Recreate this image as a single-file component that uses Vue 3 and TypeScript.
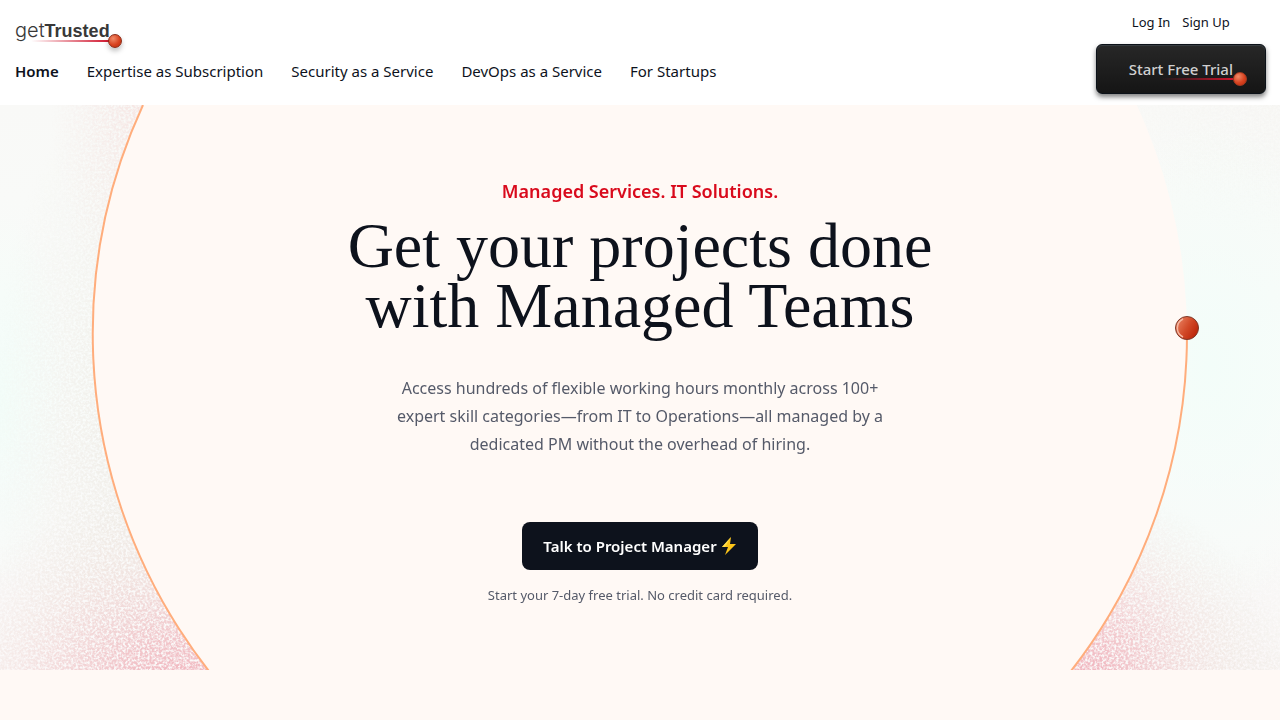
<script setup lang="ts">
interface NavItem {
  label: string
  current?: boolean
}

const navItems: NavItem[] = [
  { label: 'Home', current: true },
  { label: 'Expertise as Subscription' },
  { label: 'Security as a Service' },
  { label: 'DevOps as a Service' },
  { label: 'For Startups' },
]
</script>

<template>
  <div class="page">
    <header class="header">
      <div class="left">
        <a class="logo" href="#" aria-label="getTrusted">
          <span class="thin">get</span><span class="bold">Trusted</span>
          <span class="trail"></span>
          <span class="ball"></span>
        </a>
        <nav class="nav">
          <a v-for="item in navItems" :key="item.label" href="#" :class="{ current: item.current }">{{ item.label }}</a>
        </nav>
      </div>
      <div class="right">
        <div class="account">
          <a href="#">Log In</a>
          <a href="#">Sign Up</a>
        </div>
        <button class="trial" type="button">
          <span class="trial-text">Start Free Trial<span class="trail"></span><span class="ball"></span></span>
        </button>
      </div>
    </header>

    <main class="hero">
      <svg class="backdrop" viewBox="0 0 1280 565" preserveAspectRatio="xMidYMid slice" aria-hidden="true">
        <defs>
          <filter id="grain" x="0" y="0" width="100%" height="100%" color-interpolation-filters="sRGB">
            <feTurbulence type="fractalNoise" baseFrequency="0.42" numOctaves="2" seed="8" result="noise" />
            <feColorMatrix in="noise" type="matrix" values="0 0 0 0 0  0 0 0 0 0  0 0 0 0 0  3 0 0 0 -0.9" result="mask" />
            <feComposite in="SourceGraphic" in2="mask" operator="in" />
          </filter>
          <linearGradient id="base" x1="0" y1="0" x2="0" y2="1">
            <stop offset="0" stop-color="#f9f9f7" />
            <stop offset="0.5" stop-color="#f9fcfa" />
            <stop offset="1" stop-color="#fbf8f8" />
          </linearGradient>
          <radialGradient id="mint">
            <stop offset="0" stop-color="#f3fdf9" />
            <stop offset="1" stop-color="#f3fdf9" stop-opacity="0" />
          </radialGradient>
          <radialGradient id="rose">
            <stop offset="0" stop-color="#ee9cab" stop-opacity="0.9" />
            <stop offset="0.35" stop-color="#efb4bb" stop-opacity="0.7" />
            <stop offset="0.7" stop-color="#eed9d4" stop-opacity="0.4" />
            <stop offset="1" stop-color="#e8e4dc" stop-opacity="0" />
          </radialGradient>
          <radialGradient id="blush">
            <stop offset="0" stop-color="#f5cfcd" stop-opacity="0.5" />
            <stop offset="1" stop-color="#f3dcd8" stop-opacity="0" />
          </radialGradient>
          <radialGradient id="sand">
            <stop offset="0" stop-color="#ebe6df" stop-opacity="0.8" />
            <stop offset="0.5" stop-color="#efece6" stop-opacity="0.5" />
            <stop offset="1" stop-color="#f0efea" stop-opacity="0" />
          </radialGradient>
          <linearGradient id="disc-ball" x1="0" y1="0.2" x2="1" y2="0.8">
            <stop offset="0" stop-color="#ea8464" />
            <stop offset="0.5" stop-color="#d24a28" />
            <stop offset="1" stop-color="#b81f04" />
          </linearGradient>
        </defs>
        <rect width="1280" height="565" fill="url(#base)" />
        <ellipse cx="0" cy="290" rx="70" ry="200" fill="url(#mint)" />
        <ellipse cx="1210" cy="260" rx="150" ry="260" fill="url(#mint)" />
        <g filter="url(#grain)">
          <rect width="1280" height="565" fill="none" />
          <ellipse cx="140" cy="330" rx="150" ry="360" fill="url(#sand)" />
          <ellipse cx="150" cy="0" rx="100" ry="210" fill="url(#blush)" />
          <ellipse cx="190" cy="610" rx="280" ry="230" fill="url(#rose)" />
          <ellipse cx="1090" cy="600" rx="200" ry="220" fill="url(#rose)" />
          <ellipse cx="1280" cy="0" rx="180" ry="130" fill="url(#sand)" opacity="0.2" />
          <ellipse cx="1250" cy="590" rx="160" ry="150" fill="url(#sand)" opacity="0.6" />
        </g>
        <circle cx="640" cy="229" r="547" fill="#fff9f5" />
        <path d="M143 0A547 547 0 0 0 640 776A547 547 0 0 0 1187 229" fill="none" stroke="#ffad7c" stroke-width="2" />
        <circle cx="1187" cy="223" r="11.5" fill="url(#disc-ball)" stroke="#7d3a2a" stroke-width="1" />
        <path d="M1183 214A10 10 0 0 0 1183 232" fill="none" stroke="#f5b7a0" stroke-width="1.5" />
      </svg>
      <div class="content">
        <p class="eyebrow">Managed Services. IT Solutions.</p>
        <h1>Get your projects done<br />with Managed Teams</h1>
        <p class="lead">
          Access hundreds of flexible working hours monthly across 100+<br />
          expert skill categories—from IT to Operations—all managed by a<br />
          dedicated PM without the overhead of hiring.
        </p>
        <button class="cta" type="button">
          Talk to Project Manager
          <svg width="16" height="20" viewBox="0 0 16 20" aria-hidden="true">
            <path d="M10 1L1 11H7L4 19L15 8H9Z" fill="#fcc419" />
            <path d="M10 1L1 11H4Z" fill="#ffdf4f" />
          </svg>
        </button>
        <p class="note">Start your 7-day free trial. No credit card required.</p>
      </div>
    </main>
  </div>
</template>

<style>
body {
  margin: 0;
  background: #fff9f5;
}
</style>

<style scoped>
.page {
  font-family: "Noto Sans", "Open Sans", sans-serif;
  color: #0d121c;
}
a {
  color: inherit;
  text-decoration: none;
}
.header {
  display: flex;
  justify-content: space-between;
  box-sizing: border-box;
  min-height: 105px;
  padding: 12px 14px 11px 15px;
  background: #fff;
}
.left {
  display: flex;
  flex-direction: column;
  align-items: flex-start;
  gap: 11px;
}
.logo {
  position: relative;
  display: flex;
  align-items: baseline;
  height: 36px;
  line-height: 36px;
  color: #383838;
}
.thin {
  font-family: Inter, sans-serif;
  font-size: 20px;
  font-weight: 300;
}
.bold {
  font-family: "Liberation Sans", sans-serif;
  font-size: 18px;
  font-weight: 700;
}
.trail {
  position: absolute;
  height: 2px;
  background: linear-gradient(90deg, transparent, #d0142c);
}
.ball {
  position: absolute;
  box-sizing: border-box;
  width: 14px;
  height: 14px;
  border: 1px solid #8a2a17;
  border-radius: 50%;
  background: radial-gradient(circle at 35% 30%, #f08a68, #d84320 55%, #b92a0c);
}
.logo .trail {
  left: 16px;
  right: 0;
  top: 28px;
}
.logo .ball {
  right: -12px;
  top: 22px;
  box-shadow: 0 3px 5px rgba(0, 0, 0, 0.25);
}
.nav {
  display: flex;
  gap: 28px;
  font-size: 15px;
  line-height: 24px;
}
.current {
  font-weight: 600;
}
.right {
  display: flex;
  flex-direction: column;
  align-items: center;
  gap: 12px;
}
.account {
  display: flex;
  gap: 12px;
  font-size: 13px;
  line-height: 20px;
}
.trial {
  height: 50px;
  padding: 0 32px;
  border: 1px solid #0b1118;
  border-radius: 6px;
  background: linear-gradient(#272727, #151515);
  box-shadow: inset 0 1px 1px #3a4044, 0 3px 5px rgba(0, 0, 0, 0.5);
  color: #d0d0d0;
  font-family: inherit;
  font-size: 15px;
  font-weight: 500;
  line-height: 24px;
}
.trial-text {
  position: relative;
  display: block;
}
.trial .trail {
  left: 32px;
  right: 0;
  bottom: 1px;
}
.trial .ball {
  right: -14px;
  bottom: -5px;
  border-color: #a63a20;
}
.hero {
  position: relative;
  overflow: hidden;
  min-height: 565px;
}
.backdrop {
  position: absolute;
  inset: 0;
  width: 100%;
  height: 100%;
}
.content {
  position: relative;
  display: flex;
  flex-direction: column;
  align-items: center;
  padding: 72px 16px 0;
  text-align: center;
}
p,
h1 {
  margin: 0;
}
.eyebrow {
  color: #d90a1c;
  font-size: 18px;
  font-weight: 600;
  line-height: 28px;
}
h1 {
  margin-top: 11px;
  font-family: "Liberation Serif", serif;
  font-size: 64px;
  font-weight: 400;
  line-height: 60px;
}
.lead {
  margin-top: 38px;
  color: #555a69;
  font-size: 16px;
  line-height: 28px;
}
.cta {
  display: flex;
  align-items: center;
  gap: 4px;
  height: 48px;
  margin-top: 64px;
  padding: 0 21px;
  border: 0;
  border-radius: 8px;
  background: #0d121c;
  color: #fff;
  font-family: inherit;
  font-size: 15px;
  font-weight: 600;
  line-height: 24px;
}
.note {
  margin-top: 15px;
  color: #555a69;
  font-size: 13px;
  line-height: 20px;
}
</style>
